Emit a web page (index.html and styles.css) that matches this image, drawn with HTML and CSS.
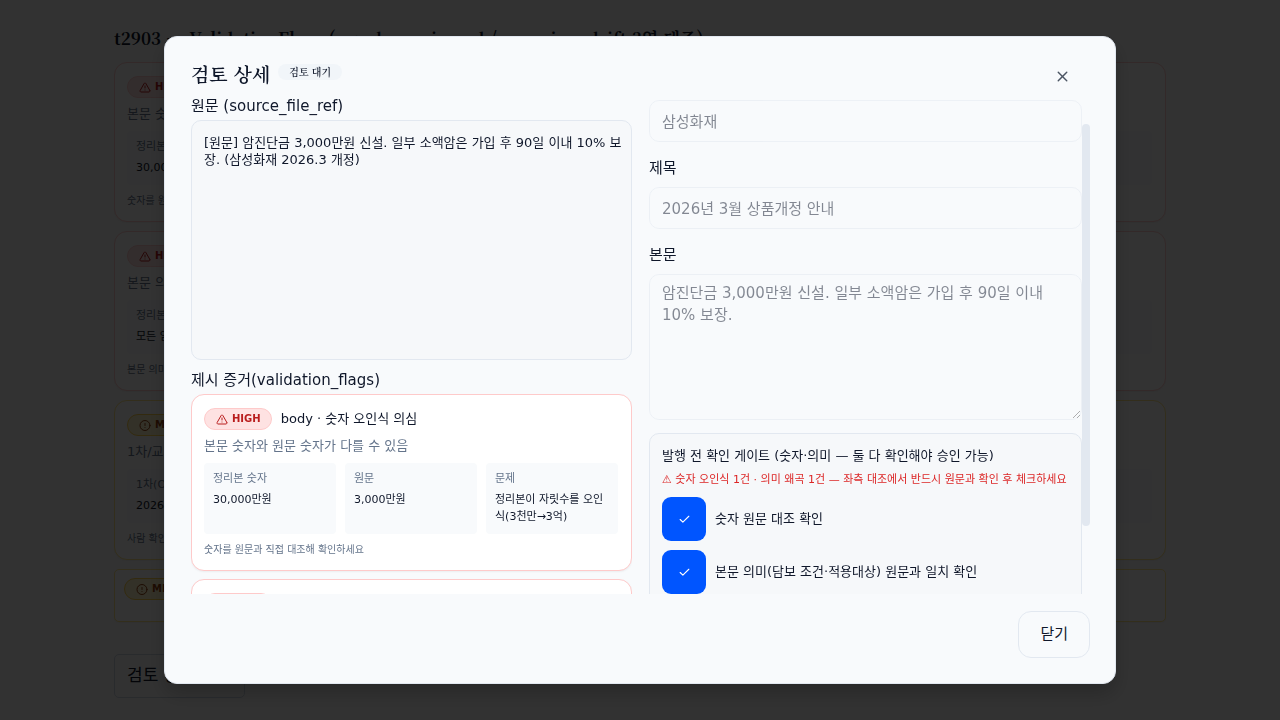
FILE: index.html
```html
<!DOCTYPE html>
<html lang="ko">
<head>
  <meta charset="UTF-8">
  <title>ValidationFlags</title>
  <link rel="stylesheet" href="styles.css">
</head>
<body>

  <svg class="sprite" aria-hidden="true">
    <symbol id="warn" viewBox="0 0 24 24">
      <path d="m21.73 18-8-14a2 2 0 0 0-3.48 0l-8 14A2 2 0 0 0 4 21h16a2 2 0 0 0 1.73-3"/>
      <path d="M12 9v4"/><path d="M12 17h.01"/>
    </symbol>
    <symbol id="alert" viewBox="0 0 24 24">
      <circle cx="12" cy="12" r="10"/><path d="M12 8v4"/><path d="M12 16h.01"/>
    </symbol>
    <symbol id="check" viewBox="0 0 24 24"><path d="M20 6 9 17l-5-5"/></symbol>
    <symbol id="close" viewBox="0 0 24 24"><path d="M18 6 6 18"/><path d="m6 6 12 12"/></symbol>
  </svg>

  <main class="page">
    <h1>t2903 — ValidationFlags (number_misread / meaning_drift 3열 대조)</h1>

    <article class="flag high">
      <div class="flag-head"><span class="badge"><svg class="icon"><use href="#warn"/></svg>HIGH</span>body · 숫자 오인식 의심</div>
      <p class="desc">본문 숫자와 원문 숫자가 다를 수 있음</p>
      <dl class="cells">
        <div><dt>정리본 숫자</dt><dd>30,000만원</dd></div>
        <div><dt>원문</dt><dd>3,000만원</dd></div>
        <div><dt>문제</dt><dd>정리본이 자릿수를 오인식(3천만→3억)</dd></div>
      </dl>
      <p class="hint">숫자를 원문과 직접 대조해 확인하세요</p>
    </article>

    <article class="flag high">
      <div class="flag-head"><span class="badge"><svg class="icon"><use href="#warn"/></svg>HIGH</span>body · 의미 왜곡 의심</div>
      <p class="desc">본문 의미가 원문과 다를 수 있음</p>
      <dl class="cells">
        <div><dt>정리본 의미</dt><dd>모든 암 보장</dd></div>
        <div><dt>원문</dt><dd>일부 소액암 10% 보장</dd></div>
        <div><dt>문제</dt><dd>담보 조건 누락</dd></div>
      </dl>
      <p class="hint">본문 의미를 원문과 직접 대조해 확인하세요</p>
    </article>

    <article class="flag medium">
      <div class="flag-head"><span class="badge"><svg class="icon"><use href="#alert"/></svg>MEDIUM</span>날짜 불일치</div>
      <p class="desc">1차/교차 추출 값이 다름</p>
      <dl class="cells">
        <div><dt>1차(OCR)</dt><dd>2026-03-01</dd></div>
        <div><dt>교차</dt><dd>2026-03-10</dd></div>
        <div><dt>문제</dt><dd>값 불일치</dd></div>
      </dl>
      <p class="hint">사람 확인이 필요합니다</p>
    </article>

    <article class="flag medium compact">
      <div class="flag-head"><span class="badge"><svg class="icon"><use href="#alert"/></svg>MEDIUM</span></div>
    </article>

    <button type="button" class="open">검토 상세 열기</button>
  </main>

  <div class="overlay">
    <section class="dialog" role="dialog" aria-modal="true" aria-labelledby="dialog-title">
      <header class="dialog-head">
        <h2 id="dialog-title">검토 상세</h2>
        <span class="status">검토 대기</span>
        <button type="button" class="close" aria-label="닫기"><svg class="icon"><use href="#close"/></svg></button>
      </header>

      <div class="columns">
        <div class="evidence">
          <div class="group">
            <h3>원문 (source_file_ref)</h3>
            <p class="source">[원문] 암진단금 3,000만원 신설. 일부 소액암은 가입 후 90일 이내 10% 보장. (삼성화재 2026.3 개정)</p>
          </div>
          <div class="group">
            <h3>제시 증거(validation_flags)</h3>
            <article class="flag high">
              <div class="flag-head"><span class="badge"><svg class="icon"><use href="#warn"/></svg>HIGH</span>body · 숫자 오인식 의심</div>
              <p class="desc">본문 숫자와 원문 숫자가 다를 수 있음</p>
              <dl class="cells">
                <div><dt>정리본 숫자</dt><dd>30,000만원</dd></div>
                <div><dt>원문</dt><dd>3,000만원</dd></div>
                <div><dt>문제</dt><dd>정리본이 자릿수를 오인식(3천만→3억)</dd></div>
              </dl>
              <p class="hint">숫자를 원문과 직접 대조해 확인하세요</p>
            </article>
            <article class="flag high">
              <div class="flag-head"><span class="badge"><svg class="icon"><use href="#warn"/></svg>HIGH</span>body · 의미 왜곡 의심</div>
              <p class="desc">본문 의미가 원문과 다를 수 있음</p>
            </article>
          </div>
        </div>

        <div class="form-wrap">
          <div class="form" id="form">
            <div class="field">
              <label for="company">보험사</label>
              <input id="company" type="text" value="삼성화재" disabled>
            </div>
            <div class="field">
              <label for="subject">제목</label>
              <input id="subject" type="text" value="2026년 3월 상품개정 안내" disabled>
            </div>
            <div class="field">
              <label for="content">본문</label>
              <textarea id="content" disabled>암진단금 3,000만원 신설. 일부 소액암은 가입 후 90일 이내 10% 보장.</textarea>
            </div>
            <div class="gate">
              <p class="gate-title">발행 전 확인 게이트 (숫자·의미 — 둘 다 확인해야 승인 가능)</p>
              <p class="gate-warning">⚠ 숫자 오인식 1건 · 의미 왜곡 1건 — 좌측 대조에서 반드시 원문과 확인 후 체크하세요</p>
              <label class="check">
                <input type="checkbox" checked>
                <svg class="icon"><use href="#check"/></svg>
                <span>숫자 원문 대조 확인</span>
              </label>
              <label class="check">
                <input type="checkbox" checked>
                <svg class="icon"><use href="#check"/></svg>
                <span>본문 의미(담보 조건·적용대상) 원문과 일치 확인</span>
              </label>
            </div>
            <div class="actions">
              <button type="button">반려</button>
              <button type="button">승인</button>
            </div>
          </div>
          <div class="thumb" id="thumb"></div>
        </div>
      </div>

      <footer class="dialog-foot">
        <button type="button">닫기</button>
      </footer>
    </section>
  </div>

  <script>
    const form = document.getElementById('form');
    const thumb = document.getElementById('thumb');

    function moveThumb() {
      const ratio = form.clientHeight / form.scrollHeight;
      thumb.style.height = form.clientHeight * ratio + 'px';
      thumb.style.top = form.scrollTop * ratio + 'px';
    }

    form.addEventListener('scroll', moveThumb);
    window.addEventListener('resize', moveThumb);

    // start at the first field, its label is above the fold
    form.scrollTop = 31;
    moveThumb();
  </script>

</body>
</html>
```

FILE: styles.css
```css
* {
  box-sizing: border-box;
}
body {
  margin: 0;
  height: 100vh;
  overflow: hidden;
  background: #fafafa;
  color: #0f172a;
  font-family: "DejaVu Sans", "Noto Sans CJK KR", sans-serif;
  font-size: 15px;
  line-height: 22px;
}
h1, h2, h3, p, dl, dd {
  margin: 0;
}
button, input, textarea {
  font: inherit;
  color: inherit;
}
.sprite {
  display: none;
}
.icon {
  width: 13px;
  height: 13px;
  fill: none;
  stroke: currentColor;
  stroke-width: 2;
  stroke-linecap: round;
  stroke-linejoin: round;
}

/* page behind the dialog */
.page {
  display: flex;
  flex-direction: column;
  gap: 9px;
  max-width: 1104px;
  margin: 0 auto;
  padding: 26px 26px;
}
h1 {
  margin-bottom: 4px;
  font-family: "Noto Serif CJK KR", "Noto Serif KR", serif;
  font-size: 17px;
  line-height: 23px;
}
.open {
  align-self: flex-start;
  width: 131px;
  height: 44px;
  margin-top: 23px;
  padding: 0 12px 2px;
  border: 1px solid #cbd5e1;
  border-radius: 5px;
  background: none;
  font-size: 17px;
  text-align: left;
  white-space: nowrap;
  overflow: hidden;
}

/* flag cards */
.flag {
  display: flex;
  flex-direction: column;
  padding: 13px 13px 12px 12px;
  border: 1px solid #fecaca;
  border-radius: 13px;
  background: #fff;
  box-shadow: 0 1px 2px rgba(0, 0, 0, 0.05);
}
.flag-head {
  display: flex;
  align-items: center;
  gap: 9px;
  font-size: 13px;
}
.badge {
  display: flex;
  align-items: center;
  gap: 4px;
  height: 22px;
  padding: 0 10px 0 11px;
  border: 1px solid #fecaca;
  border-radius: 11px;
  background: #fee2e2;
  color: #b91c1c;
  font-size: 10px;
  font-weight: bold;
}
.badge .icon {
  width: 12px;
}
.medium {
  border-color: #fde68a;
}
.medium .badge {
  border-color: #fcd34d;
  background: #fef3c7;
  color: #92400e;
}
.compact {
  height: 53px;
  padding: 8px 9px;
  border-radius: 5px;
}
.desc {
  margin: 6px 0;
  color: #64748b;
  font-size: 13px;
  line-height: 20px;
}
.cells {
  display: grid;
  grid-template-columns: repeat(3, 1fr);
  gap: 9px;
  margin-top: 1px;
  font-size: 11px;
}
.cells div {
  padding: 7px 8px 9px 9px;
  border-radius: 4px;
  background: #f8fafc;
}
.cells dt {
  margin-bottom: 4px;
  color: #64748b;
  line-height: 17px;
}
.cells dd {
  line-height: 17px;
}
.hint {
  margin-top: 8px;
  color: #64748b;
  font-size: 10px;
  line-height: 16px;
}

/* dialog */
.overlay {
  position: fixed;
  inset: 0;
  display: flex;
  align-items: center;
  justify-content: center;
  background: rgba(0, 0, 0, 0.8);
}
.dialog {
  display: flex;
  flex-direction: column;
  width: 90%;
  max-width: 952px;
  height: 90vh;
  padding: 25px;
  padding-left: 26px;
  border: 1px solid #e2e8f0;
  border-radius: 13px;
  background: #f8fafc;
  box-shadow: 0 10px 20px rgba(0, 0, 0, 0.2);
}
.dialog-head {
  display: flex;
  align-items: flex-start;
  gap: 8px;
  height: 37px;
  font-family: "Noto Serif CJK KR", "Noto Serif KR", serif;
}
h2 {
  font-size: 19px;
  font-weight: 600;
  line-height: 23px;
}
.status {
  margin-top: 2px;
  padding: 0 11px;
  border-radius: 8px;
  background: #f1f5f9;
  font-size: 10px;
  font-weight: 600;
  line-height: 16px;
}
.close {
  display: flex;
  margin: 6px 19px 0 auto;
  padding: 0;
  border: 0;
  background: none;
  color: #4b5563;
}
.close .icon {
  width: 17px;
  height: 17px;
}
.columns {
  display: grid;
  grid-template-columns: 1fr 1fr;
  gap: 17px;
  flex: 1;
  min-height: 0;
}
.evidence {
  display: flex;
  flex-direction: column;
  gap: 13px;
  overflow: hidden;
}
.group {
  display: flex;
  flex-direction: column;
  gap: 8px;
  flex-shrink: 0;
}
h3 {
  margin-bottom: -2px;
  font-size: 15px;
  font-weight: normal;
  line-height: 15px;
}
.source {
  height: 240px;
  padding: 13px 6px 13px 12px;
  border: 1px solid #e2e8f0;
  border-radius: 10px;
  background: #f6f8fa;
  font-size: 13px;
  line-height: 17px;
}

/* right column */
.form-wrap {
  position: relative;
  min-height: 0;
}
.form {
  display: flex;
  flex-direction: column;
  gap: 13px;
  height: 100%;
  padding-right: 8px;
  overflow-y: auto;
  scrollbar-width: none;
}
.thumb {
  position: absolute;
  top: 0;
  right: 0;
  width: 8px;
  border-radius: 4px;
  background: #e2e8f0;
}
.field {
  display: flex;
  flex-direction: column;
  gap: 6px;
  flex-shrink: 0;
}
.field label {
  line-height: 26px;
}
.field input,
.field textarea {
  width: 100%;
  height: 42px;
  padding: 7px 12px 9px;
  border: 1px solid #e2e8f0;
  border-radius: 10px;
  background: transparent;
  opacity: 0.5;
}
.field textarea {
  height: 146px;
}
.gate {
  display: flex;
  flex-direction: column;
  gap: 9px;
  flex-shrink: 0;
  padding: 12px;
  border: 1px solid #e2e8f0;
  border-radius: 10px;
  background: #f6f8fa;
}
.gate-title {
  font-size: 13px;
  line-height: 20px;
}
.gate-warning {
  margin-top: -4px;
  color: #dc2626;
  font-size: 11px;
  line-height: 17px;
  white-space: nowrap;
}
.check {
  display: grid;
  grid-template-columns: 44px 1fr;
  align-items: center;
  column-gap: 9px;
  font-size: 13px;
}
.check input,
.check .icon {
  grid-area: 1 / 1;
  justify-self: center;
}
.check input {
  appearance: none;
  width: 44px;
  height: 44px;
  margin: 0;
  border-radius: 9px;
  background: #0055ff;
}
.check .icon {
  z-index: 1;
  color: #fff;
  pointer-events: none;
}
.actions {
  display: flex;
  gap: 9px;
  flex-shrink: 0;
}
.actions button,
.dialog-foot button {
  height: 47px;
  padding: 0 21px 2px;
  border: 1px solid #e2e8f0;
  border-radius: 13px;
  background: #f8fafc;
}
.actions button {
  height: 58px;
}
.dialog-foot {
  display: flex;
  justify-content: flex-end;
  padding-top: 17px;
}
```
